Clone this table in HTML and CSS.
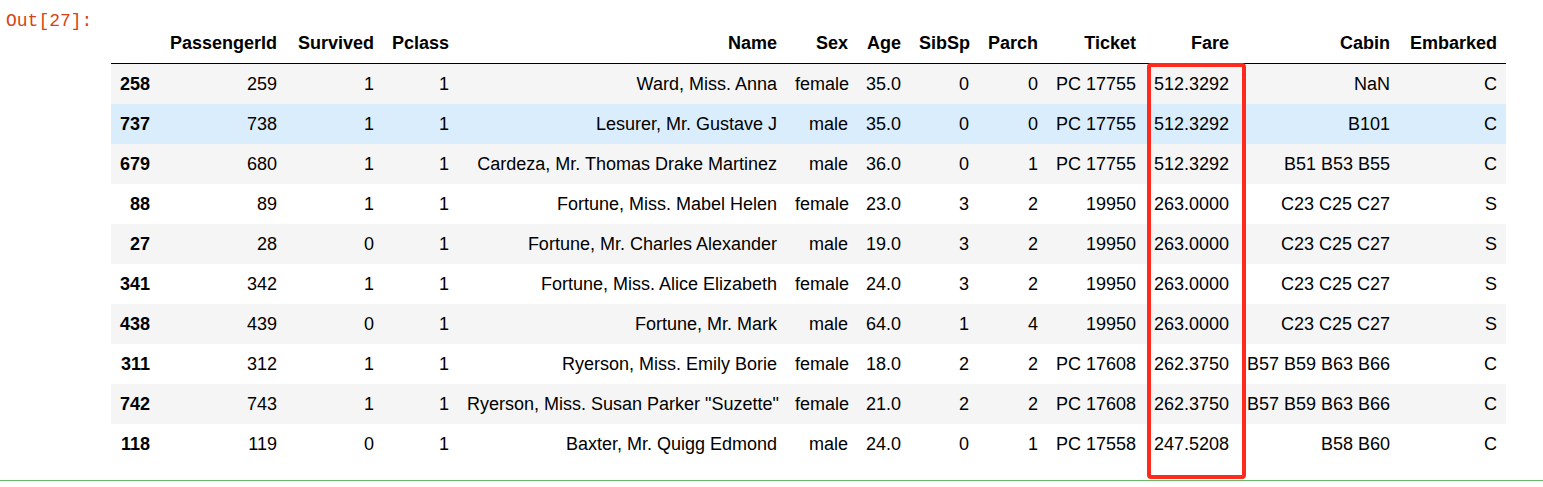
FILE: index.html
```html
<!DOCTYPE html>
<html>
<head>
<meta charset="utf-8">
<link rel="stylesheet" href="styles.css">
</head>
<body>
<div class="output-area">
  <div class="prompt">Out[27]:</div>
  <div class="output-body">
    <table class="dataframe">
      <colgroup>
        <col class="w-idx"><col class="w-pid"><col class="w-surv"><col class="w-pclass"><col class="w-name"><col class="w-sex"><col class="w-age"><col class="w-sib"><col class="w-parch"><col class="w-ticket"><col class="w-fare"><col class="w-cabin"><col class="w-emb">
      </colgroup>
      <thead>
        <tr><th></th><th>PassengerId</th><th>Survived</th><th>Pclass</th><th>Name</th><th>Sex</th><th>Age</th><th>SibSp</th><th>Parch</th><th>Ticket</th><th>Fare</th><th>Cabin</th><th>Embarked</th></tr>
      </thead>
      <tbody>
        <tr><th>258</th><td>259</td><td>1</td><td>1</td><td>Ward, Miss. Anna</td><td>female</td><td>35.0</td><td>0</td><td>0</td><td>PC 17755</td><td>512.3292</td><td>NaN</td><td>C</td></tr>
        <tr class="hover"><th>737</th><td>738</td><td>1</td><td>1</td><td>Lesurer, Mr. Gustave J</td><td>male</td><td>35.0</td><td>0</td><td>0</td><td>PC 17755</td><td>512.3292</td><td>B101</td><td>C</td></tr>
        <tr><th>679</th><td>680</td><td>1</td><td>1</td><td>Cardeza, Mr. Thomas Drake Martinez</td><td>male</td><td>36.0</td><td>0</td><td>1</td><td>PC 17755</td><td>512.3292</td><td>B51 B53 B55</td><td>C</td></tr>
        <tr><th>88</th><td>89</td><td>1</td><td>1</td><td>Fortune, Miss. Mabel Helen</td><td>female</td><td>23.0</td><td>3</td><td>2</td><td>19950</td><td>263.0000</td><td>C23 C25 C27</td><td>S</td></tr>
        <tr><th>27</th><td>28</td><td>0</td><td>1</td><td>Fortune, Mr. Charles Alexander</td><td>male</td><td>19.0</td><td>3</td><td>2</td><td>19950</td><td>263.0000</td><td>C23 C25 C27</td><td>S</td></tr>
        <tr><th>341</th><td>342</td><td>1</td><td>1</td><td>Fortune, Miss. Alice Elizabeth</td><td>female</td><td>24.0</td><td>3</td><td>2</td><td>19950</td><td>263.0000</td><td>C23 C25 C27</td><td>S</td></tr>
        <tr><th>438</th><td>439</td><td>0</td><td>1</td><td>Fortune, Mr. Mark</td><td>male</td><td>64.0</td><td>1</td><td>4</td><td>19950</td><td>263.0000</td><td>C23 C25 C27</td><td>S</td></tr>
        <tr><th>311</th><td>312</td><td>1</td><td>1</td><td>Ryerson, Miss. Emily Borie</td><td>female</td><td>18.0</td><td>2</td><td>2</td><td>PC 17608</td><td>262.3750</td><td>B57 B59 B63 B66</td><td>C</td></tr>
        <tr><th>742</th><td>743</td><td>1</td><td>1</td><td>Ryerson, Miss. Susan Parker "Suzette"</td><td>female</td><td>21.0</td><td>2</td><td>2</td><td>PC 17608</td><td>262.3750</td><td>B57 B59 B63 B66</td><td>C</td></tr>
        <tr><th>118</th><td>119</td><td>0</td><td>1</td><td>Baxter, Mr. Quigg Edmond</td><td>male</td><td>24.0</td><td>0</td><td>1</td><td>PC 17558</td><td>247.5208</td><td>B58 B60</td><td>C</td></tr>
      </tbody>
    </table>
  </div>
</div>
<div class="cell-border"></div>
<div class="highlight-box"></div>
</body>
</html>
```

FILE: styles.css
```css
html, body {
  margin: 0;
  padding: 0;
  background: #ffffff;
}

body {
  position: relative;
  width: 1543px;
  height: 487px;
  overflow: hidden;
  font-family: "Liberation Sans", Arial, sans-serif;
  color: #000;
}

.output-area {
  display: flex;
  align-items: flex-start;
}

.prompt {
  width: 105px;
  padding-left: 6px;
  padding-top: 12px;
  font-family: "Liberation Mono", "DejaVu Sans Mono", monospace;
  font-size: 18px;
  line-height: 18px;
  color: #d84315;
  flex: none;
}

.output-body {
  padding-top: 23px;
  padding-bottom: 16px;
}

.dataframe {
  border-collapse: separate;
  border-spacing: 0;
  table-layout: fixed;
  width: 1395px;
  font-size: 18px;
}

.dataframe th,
.dataframe td {
  padding: 0 9px;
  height: 40px;
  line-height: 20px;
  text-align: right;
  vertical-align: middle;
  white-space: nowrap;
  overflow: visible;
}

.dataframe thead th {
  font-weight: bold;
  border-bottom: 1px solid #000;
}

.dataframe tbody th {
  font-weight: bold;
}

.dataframe tbody tr:nth-child(odd) {
  background: #f5f5f5;
}

.dataframe tbody tr.hover {
  background: #d9edfd;
}

.w-idx { width: 48px; }
.w-pid { width: 127px; }
.w-surv { width: 97px; }
.w-pclass { width: 75px; }
.w-name { width: 328px; }
.w-sex { width: 71px; }
.w-age { width: 53px; }
.w-sib { width: 68px; }
.w-parch { width: 69px; }
.w-ticket { width: 98px; }
.w-fare { width: 93px; }
.w-cabin { width: 161px; }
.w-emb { width: 107px; }

.cell-border {
  height: 1px;
  background: #66bb6a;
}

.highlight-box {
  position: absolute;
  left: 1147px;
  top: 63px;
  width: 99px;
  height: 416px;
  box-sizing: border-box;
  border: 4px solid #fe2a1e;
  border-radius: 4px;
}
```
